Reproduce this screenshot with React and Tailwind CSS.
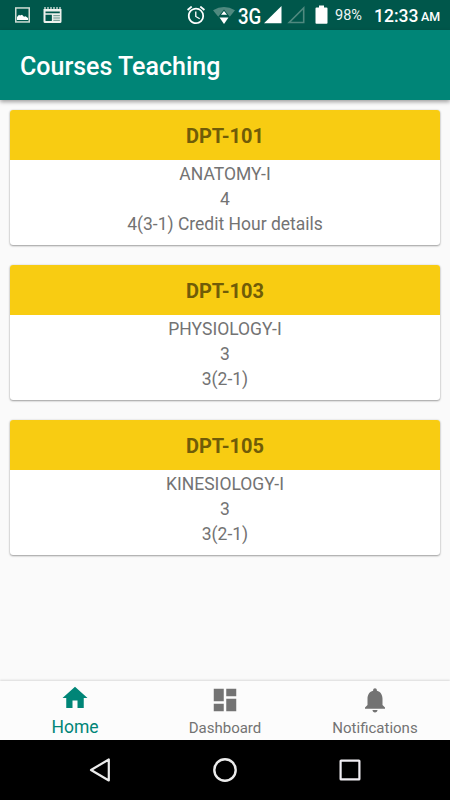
import React from "react";

const courses = [
  { code: "DPT-101", name: "ANATOMY-I", hours: "4", details: "4(3-1) Credit Hour details" },
  { code: "DPT-103", name: "PHYSIOLOGY-I", hours: "3", details: "3(2-1)" },
  { code: "DPT-105", name: "KINESIOLOGY-I", hours: "3", details: "3(2-1)" },
];

function StatusBar() {
  return (
    <div className="flex h-[30px] shrink-0 items-start bg-[#00574b] text-white">
      <svg className="ml-[15px] mt-[7px] shrink-0" width="15" height="16" viewBox="0 0 15 16">
        <rect x="0.75" y="0.95" width="13.5" height="14" fill="none" stroke="#cfdcd4" strokeWidth="1.5" />
        <path d="M2 13V10l2-2.2 1 .8L7 7.8l2 2 1.5-.6L13 11v2z" fill="#fff" />
      </svg>
      <svg className="ml-[13px] mt-[7px] shrink-0" width="19" height="16" viewBox="0 0 19 16">
        <path
          fillRule="evenodd"
          fill="#edf1ed"
          d="M0.5 2H18.5V14.5Q18.5 16 17 16H2Q0.5 16 0.5 14.5zM2.5 4.5V6.2H16.8V4.5zM2.5 7.7V14H8.8V7.7z"
        />
        <path d="M3 8.2h5.4v5.4H3z" fill="#00574b" />
        <path d="M10.3 8.7h6.6M10.3 11h6.6M10.3 13.3h6.6" stroke="#5f8f86" strokeWidth="1" />
        <path d="M2 0v2M5 0v2M8 0v2M11 0v2M14 0v2M17 0v2" stroke="#edf1ed" strokeWidth="1.2" />
      </svg>
      <svg className="ml-[125px] mt-[6px] shrink-0" width="18" height="18" viewBox="2 2 20 20">
        <path
          fill="#fff"
          d="M22 5.72l-4.6-3.86-1.29 1.53 4.6 3.86L22 5.72zM7.88 3.39L6.6 1.86 2 5.71l1.29 1.53 4.59-3.85zM12.5 8H11v6l4.75 2.85.75-1.23-4-2.37V8zM12 4c-4.97 0-9 4.03-9 9s4.02 9 9 9a9 9 0 0 0 0-18zm0 16c-3.87 0-7-3.13-7-7s3.13-7 7-7 7 3.13 7 7-3.13 7-7 7z"
        />
      </svg>
      <svg className="ml-[8px] mt-[6px] shrink-0" width="22" height="18" viewBox="0 0 22 18">
        <path d="M0 4.2Q11-2.2 22 4.2L11 18z" fill="#4f897f" />
        <path d="M5 11L11 3.6 17 11 11 18.5z" fill="#00574b" />
        <path d="M8 8.8L11 5l3 3.8zM6.5 11.5h9L11 18z" fill="#fff" />
      </svg>
      <span className="ml-[3px] mt-[4px] w-[26px] origin-left scale-x-[0.83] whitespace-nowrap text-[22.5px] font-medium leading-[24px]">3G</span>
      <svg className="mt-[6px] shrink-0" width="18" height="18" viewBox="0 0 18 18">
        <path d="M17.5 0v17.3H0z" fill="#fff" />
      </svg>
      <svg className="ml-[5px] mt-[6px] shrink-0" width="18" height="18" viewBox="0 0 18 18">
        <path d="M16.7 2v14.5H2.2z" fill="none" stroke="#4f897f" strokeWidth="1.6" />
      </svg>
      <svg className="ml-[10px] mt-[5px] shrink-0" width="13" height="19" viewBox="0 0 13 19">
        <path d="M4 0.5h5v2h2.5q1 0 1 1V18q0 .8-1 .8h-10q-1 0-1-.8V3.5q0-1 1-1H4z" fill="#fff" />
      </svg>
      <span className="ml-[7px] mt-[6px] w-[39px] whitespace-nowrap text-[14.5px] leading-[20px] text-[#f0f5f4]">98%</span>
      <span className="mt-[4px] w-[47px] whitespace-nowrap text-[17.5px] font-medium leading-[24px]">12:33</span>
      <span className="mt-[7px] whitespace-nowrap text-[12.5px] font-medium leading-[20px]">AM</span>
    </div>
  );
}

function CourseCard({ code, name, hours, details }) {
  return (
    <section className="h-[135px] overflow-hidden rounded-[3px] bg-white text-center text-[17.5px] text-[#737373] shadow-[0_1px_2px_rgba(0,0,0,0.34),0_0_2px_rgba(0,0,0,0.16)]">
      <h2 className="flex h-[50px] items-center justify-center bg-[#f8cc12] pt-[2px] text-[20px] font-bold text-[#705c08]">{code}</h2>
      <p className="h-[25px] leading-[28px]">{name}</p>
      <p className="h-[25px] leading-[28px]">{hours}</p>
      <p className="h-[25px] leading-[28px]">{details}</p>
    </section>
  );
}

function BottomNav() {
  return (
    <nav className="grid h-[59px] shrink-0 grid-cols-3 bg-[#fcfcfc] text-[#737373] shadow-[0_-1px_2px_rgba(0,0,0,0.13)]">
      <div className="flex flex-col items-center text-[#008577]">
        <svg className="mt-[2px]" width="30" height="30" viewBox="0 0 24 24">
          <path fill="currentColor" d="M10 20v-6h4v6h5v-8h3L12 3 2 12h3v8z" />
        </svg>
        <span className="mt-[3px] text-[17.5px] leading-[22px]">Home</span>
      </div>
      <div className="flex flex-col items-center">
        <svg className="mt-[4px]" width="30" height="30" viewBox="0 0 24 24">
          <path fill="currentColor" d="M3 13h8V3H3v10zm0 8h8v-6H3v6zm10 0h8V11h-8v10zm0-18v6h8V3h-8z" />
        </svg>
        <span className="mt-[3px] text-[15px] leading-[20px]">Dashboard</span>
      </div>
      <div className="flex flex-col items-center">
        <svg className="mt-[4px]" width="30" height="30" viewBox="0 0 24 24">
          <path
            fill="currentColor"
            d="M12 22c1.1 0 2-.9 2-2h-4c0 1.1.89 2 2 2zm6-6v-5c0-3.07-1.64-5.64-4.5-6.32V4c0-.83-.67-1.5-1.5-1.5s-1.5.67-1.5 1.5v.68C7.63 5.36 6 7.92 6 11v5l-2 2v1h16v-1l-2-2z"
          />
        </svg>
        <span className="mt-[3px] text-[15px] leading-[20px]">Notifications</span>
      </div>
    </nav>
  );
}

function SystemNav() {
  return (
    <div className="flex h-[60px] shrink-0 items-center justify-center gap-[95px] bg-black">
      <svg width="30" height="30" viewBox="0 0 30 30" fill="none" stroke="#ececec" strokeWidth="2.2" strokeLinejoin="round">
        <path d="M23.8 4.5v21L6 15z" />
      </svg>
      <svg width="30" height="30" viewBox="0 0 30 30" fill="none" stroke="#ececec" strokeWidth="2.4">
        <circle cx="15" cy="15" r="10.7" />
      </svg>
      <svg width="30" height="30" viewBox="0 0 30 30" fill="none" stroke="#f0edf2" strokeWidth="2.2" strokeLinejoin="round">
        <rect x="5.6" y="5.6" width="18.8" height="18.8" rx="0.5" />
      </svg>
    </div>
  );
}

export default function App() {
  return (
    <div className="flex h-[800px] w-[450px] flex-col overflow-hidden bg-[#fafafa] font-[Roboto,sans-serif]">
      <StatusBar />
      <header className="flex h-[70px] shrink-0 items-center bg-[#008577] pl-[20px] pt-[3px] shadow-[0_2px_4px_rgba(0,0,0,0.36)]">
        <h1 className="text-[25px] font-medium leading-[30px] text-white">Courses Teaching</h1>
      </header>
      <main className="flex flex-1 flex-col gap-[20px] p-[10px]">
        {courses.map((course) => (
          <CourseCard key={course.code} {...course} />
        ))}
      </main>
      <BottomNav />
      <SystemNav />
    </div>
  );
}
